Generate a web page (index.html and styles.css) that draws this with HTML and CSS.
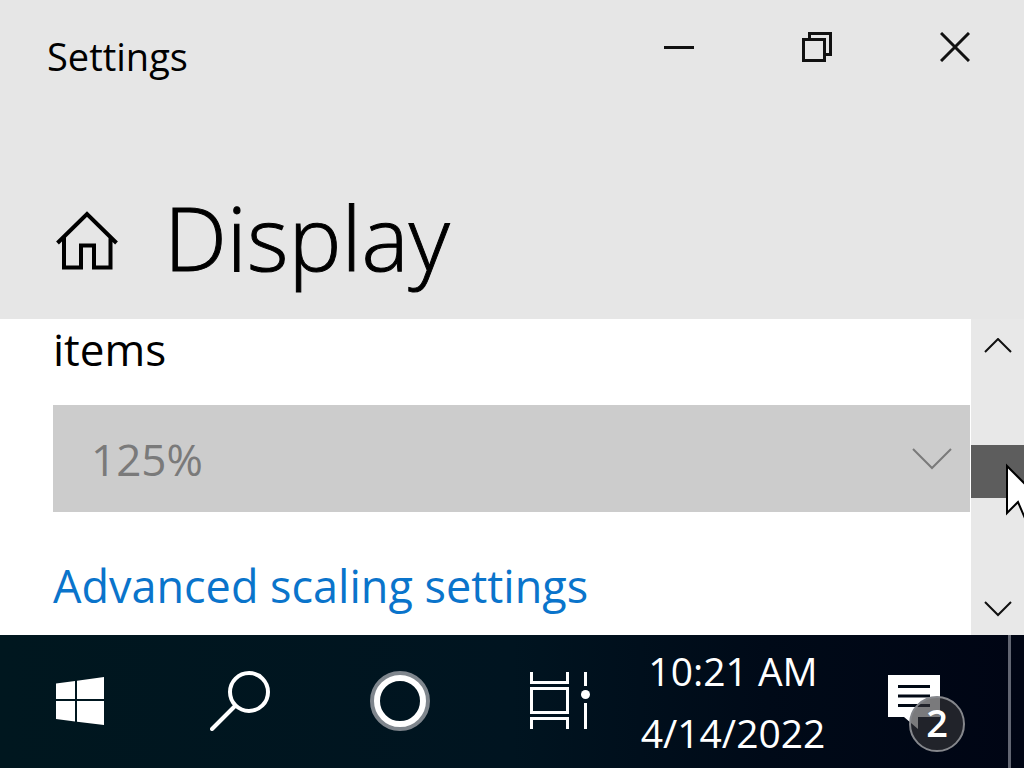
FILE: index.html
```html
<!DOCTYPE html>
<html lang="en">
<head>
  <meta charset="UTF-8">
  <meta name="viewport" content="width=device-width, initial-scale=1.0">
  <title>Settings</title>
  <link rel="stylesheet" href="styles.css">
</head>
<body>
  <header class="header">
    <div class="titlebar">
      <span class="app-name">Settings</span>
      <div class="window-controls">
        <button class="window-btn" aria-label="Minimize">
          <svg width="30" height="30" viewBox="0 0 30 30"><path d="M0 15.5H30"/></svg>
        </button>
        <button class="window-btn" aria-label="Restore">
          <svg width="30" height="30" viewBox="0 0 30 30"><path d="M1.5 7.5H22.5V28.5H1.5ZM7.5 7.5V1.5H28.5V22.5H22.5"/></svg>
        </button>
        <button class="window-btn" aria-label="Close">
          <svg width="30" height="30" viewBox="0 0 30 30"><path d="M1 1L29 29M29 1L1 29"/></svg>
        </button>
      </div>
    </div>
    <div class="page-title">
      <button class="home-btn" aria-label="Home">
        <svg width="62" height="60" viewBox="0 0 62 60"><path d="M1.5 32L31 3L60.5 32M8 26V56.5H25V34.5H38V56.5H54.5V26"/></svg>
      </button>
      <h1>Display</h1>
    </div>
  </header>

  <main class="main">
    <div class="content">
      <label for="scale-select">items</label>
      <div class="select-box">
        <select id="scale-select" disabled>
          <option>125%</option>
        </select>
        <svg width="40" height="22" viewBox="0 0 40 22"><path d="M1 1L20 20L39 1"/></svg>
      </div>
      <a href="#">Advanced scaling settings</a>
    </div>
    <div class="scrollbar">
      <button class="scroll-btn" aria-label="Scroll up">
        <svg width="28" height="16" viewBox="0 0 28 16"><path d="M1 14L14 1L27 14"/></svg>
      </button>
      <div class="track">
        <div class="thumb">
          <svg class="pointer" width="40" height="64" viewBox="0 0 40 64"><path d="M2 3V50L13 39L22 60L30 57L22 36H35Z"/></svg>
        </div>
      </div>
      <button class="scroll-btn" aria-label="Scroll down">
        <svg width="28" height="16" viewBox="0 0 28 16"><path d="M1 1L14 14L27 1"/></svg>
      </button>
    </div>
  </main>

  <footer class="taskbar">
    <button class="task-btn" aria-label="Start">
      <svg width="48" height="48" viewBox="0 0 48 48" fill="#fff"><path d="M0 6.5L19 4V22H0ZM21 3.7L48 0V22H21ZM0 24H19V44.5L0 42ZM21 24H48V48L21 44.8Z"/></svg>
    </button>
    <button class="task-btn" aria-label="Search">
      <svg width="60" height="60" viewBox="0 0 60 60" fill="none" stroke="#fff"><circle cx="39" cy="21" r="19" stroke-width="4"/><path d="M25 35L2 58" stroke-width="4" stroke-linecap="round"/></svg>
    </button>
    <button class="task-btn" aria-label="Cortana">
      <svg width="60" height="60" viewBox="0 0 60 60" fill="none"><circle cx="30" cy="30" r="27" stroke="#7f868d" stroke-width="6"/><circle cx="30" cy="30" r="23" stroke="#fff" stroke-width="6"/></svg>
    </button>
    <button class="task-btn" aria-label="Task View">
      <svg width="60" height="58" viewBox="0 0 60 58" fill="none" stroke="#fff" stroke-width="3"><path d="M1.5 0V10.5H37.5V0M1.5 16.5H37.5V40.5H1.5ZM1.5 57V46.5H37.5V57M55.5 0V14M55.5 31V57"/><circle cx="55.5" cy="22.5" r="4.5" fill="#fff" stroke="none"/></svg>
    </button>
    <button class="clock">
      <span>10:21 AM</span>
      <span>4/14/2022</span>
    </button>
    <button class="notifications" aria-label="Notifications">
      <svg width="52" height="54" viewBox="0 0 52 54"><path d="M0 0H52V42H30V54L16 42H0Z" fill="#fff"/><path d="M10 11.5H42M10 21H42M10 30.5H42" stroke="#000814" stroke-width="3"/></svg>
      <span class="badge">2</span>
    </button>
    <button class="show-desktop" aria-label="Show desktop"></button>
  </footer>
</body>
</html>
```

FILE: styles.css
```css
* {
  box-sizing: border-box;
}

body {
  font-family: "Open Sans", "Noto Sans", sans-serif;
  margin: 0;
  min-height: 100vh;
  display: flex;
  flex-direction: column;
  overflow: hidden;
  background: #e6e6e6;
  color: #000;
}

button {
  margin: 0;
  padding: 0;
  border: none;
  background: none;
  font: inherit;
  color: inherit;
}

svg {
  display: block;
}

/* Window header */
.titlebar {
  display: flex;
  justify-content: space-between;
  padding-left: 47px;
}

.app-name {
  padding-top: 28px;
  font-size: 38px;
  line-height: 56px;
}

.window-controls {
  display: flex;
}

.window-btn {
  width: 138px;
  height: 94px;
  display: flex;
  justify-content: center;
  align-items: center;
}

.window-btn svg {
  fill: none;
  stroke: #111;
  stroke-width: 3;
}

.page-title {
  display: flex;
  align-items: flex-start;
  gap: 46px;
  height: 225px;
  padding: 83px 56px 0;
}

.home-btn {
  padding-top: 34px;
}

.home-btn svg {
  fill: none;
  stroke: #000;
  stroke-width: 4;
}

.page-title h1 {
  margin: 0;
  font-size: 89px;
  font-weight: 300;
  line-height: 120px;
  -webkit-text-stroke: 1px #000;
}

/* Settings page */
.main {
  flex: 1;
  display: flex;
  background: #fff;
}

.content {
  flex: 1;
  display: flex;
  flex-direction: column;
  align-items: flex-start;
  padding-left: 53px;
  padding-right: 1px;
  font-size: 44px;
  line-height: 60px;
}

.content label {
  margin-bottom: 26px;
}

.select-box {
  width: 100%;
  display: grid;
  align-items: center;
  margin-bottom: 44px;
}

.select-box select,
.select-box svg {
  grid-area: 1 / 1;
}

.select-box select {
  appearance: none;
  width: 100%;
  height: 107px;
  padding: 0 38px;
  border: none;
  border-radius: 0;
  background: #ccc;
  color: #7a7a7a;
  opacity: 1;
  font: inherit;
}

.select-box svg {
  justify-self: end;
  margin-right: 18px;
  fill: none;
  stroke: #7a7a7a;
  stroke-width: 2;
  pointer-events: none;
}

.content a {
  color: #0a74cb;
  font-size: 45px;
  text-decoration: none;
}

.scrollbar {
  width: 53px;
  display: flex;
  flex-direction: column;
  background: #e8e8e8;
}

.scroll-btn {
  height: 53px;
  display: flex;
  justify-content: center;
  align-items: center;
}

.scroll-btn svg {
  fill: none;
  stroke: #111;
  stroke-width: 2;
}

.track {
  flex: 1;
  padding-top: 73px;
}

.thumb {
  position: relative;
  height: 53px;
  background: #5d5d5d;
}

.pointer {
  position: absolute;
  top: 18px;
  left: 34px;
  fill: #fff;
  stroke: #000;
  stroke-width: 2;
}

/* Taskbar */
.taskbar {
  display: flex;
  height: 133px;
  background: linear-gradient(to right, #00171f, #001420 50%, #000a18 75%, #000514);
  color: #fff;
}

.task-btn {
  width: 160px;
  padding-bottom: 2px;
  display: flex;
  justify-content: center;
  align-items: center;
}

.clock {
  width: 186px;
  display: flex;
  flex-direction: column;
  align-items: center;
  justify-content: center;
  font-size: 39px;
  line-height: 62px;
  white-space: nowrap;
}

.notifications {
  position: relative;
  flex: 1;
  padding-left: 62px;
}

.badge {
  position: absolute;
  left: 83px;
  top: 61px;
  width: 56px;
  height: 56px;
  border: 2px solid #85878c;
  border-radius: 50%;
  background: rgba(50, 50, 54, 0.65);
  font-size: 38px;
  font-weight: 600;
  line-height: 48px;
  text-align: center;
}

.show-desktop {
  width: 16px;
  border-left: 3px solid #626672;
}
```
